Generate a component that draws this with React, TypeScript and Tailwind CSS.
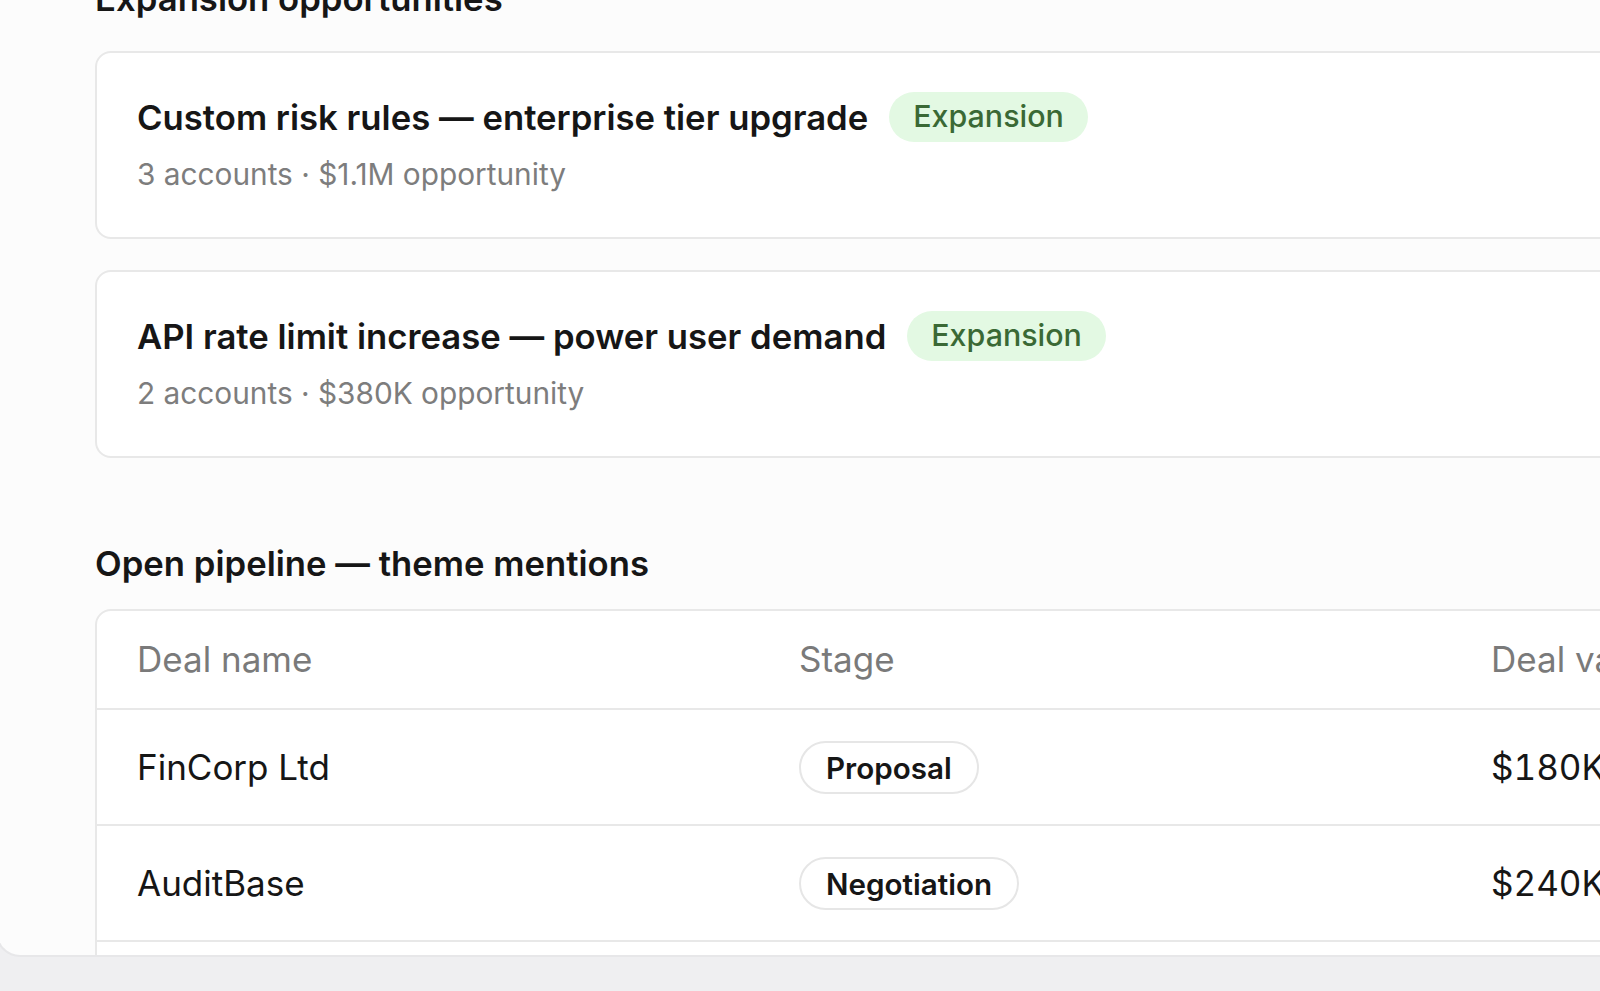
import React from "react";

function OppCard({ title, meta }: { title: string; meta: string }) {
  return (
    <div className="rounded-[16px] border-2 border-[#e8e8e8] bg-white px-[40px] pt-[39px] pb-[43px]">
      <div className="flex items-center gap-[21px]">
        <span className="text-[34.7px] font-semibold leading-[44px] text-[#161616]">{title}</span>
        <span className="flex h-[50px] items-center rounded-full bg-[#e3f9e3] px-[24px] text-[30.4px] font-medium text-[#3a6935]">
          Expansion
        </span>
      </div>
      <div className="mt-[12px] text-[29.8px] leading-[40px] text-[#7d7d7d]">{meta}</div>
    </div>
  );
}

function StageBadge({ label }: { label: string }) {
  return (
    <span className="inline-flex h-[53px] items-center rounded-full border-2 border-[#e6e6e6] bg-white px-[25px] text-[29.6px] font-semibold text-[#161616]">
      {label}
    </span>
  );
}

const rows = [
  { name: "FinCorp Ltd", stage: "Proposal", value: "$180K" },
  { name: "AuditBase", stage: "Negotiation", value: "$240K" },
  { name: "ClearLedger", stage: "Discovery", value: "$95K" },
];

export default function App() {
  return (
    <div
      className="h-[991px] w-[1600px] overflow-hidden bg-[#efeff1]"
      style={{ fontFamily: "Inter, 'Noto Sans', sans-serif" }}
    >
      <div className="-ml-[4px] h-[957px] w-[1604px] overflow-hidden rounded-bl-[24px] border-b-2 border-l-2 border-[#e7e7e9] bg-[#fcfcfc]">
        <div className="-mt-[24px] w-[1800px] pl-[97px]">
          <h2 className="mb-[31px] text-[34.7px] font-semibold leading-[44px] text-[#161616]">
            Expansion opportunities
          </h2>
          <div className="flex flex-col gap-[31px]">
            <OppCard
              title="Custom risk rules — enterprise tier upgrade"
              meta="3 accounts · $1.1M opportunity"
            />
            <OppCard
              title="API rate limit increase — power user demand"
              meta="2 accounts · $380K opportunity"
            />
          </div>
          <h2 className="mt-[83px] mb-[24px] text-[34.7px] font-semibold leading-[44px] text-[#161616]">
            Open pipeline — theme mentions
          </h2>
          <div className="rounded-tl-[16px] border-2 border-[#e8e8e8] bg-white">
            <div className="grid h-[99px] grid-cols-[662px_692px_1fr] items-center border-b-2 border-[#e8e8e8] text-[35px] text-[#7a7a7a]">
              <div className="pl-[40px]">Deal name</div>
              <div className="pl-[40px]">Stage</div>
              <div className="pl-[40px]">Deal value</div>
            </div>
            {rows.map((r) => (
              <div
                key={r.name}
                className="grid h-[116px] grid-cols-[662px_692px_1fr] items-center border-b-2 border-[#e8e8e8] text-[35px] text-[#161616]"
              >
                <div className="pl-[40px]">{r.name}</div>
                <div className="pl-[40px]">
                  <StageBadge label={r.stage} />
                </div>
                <div className="pl-[40px] tabular-nums">{r.value}</div>
              </div>
            ))}
          </div>
        </div>
      </div>
    </div>
  );
}
